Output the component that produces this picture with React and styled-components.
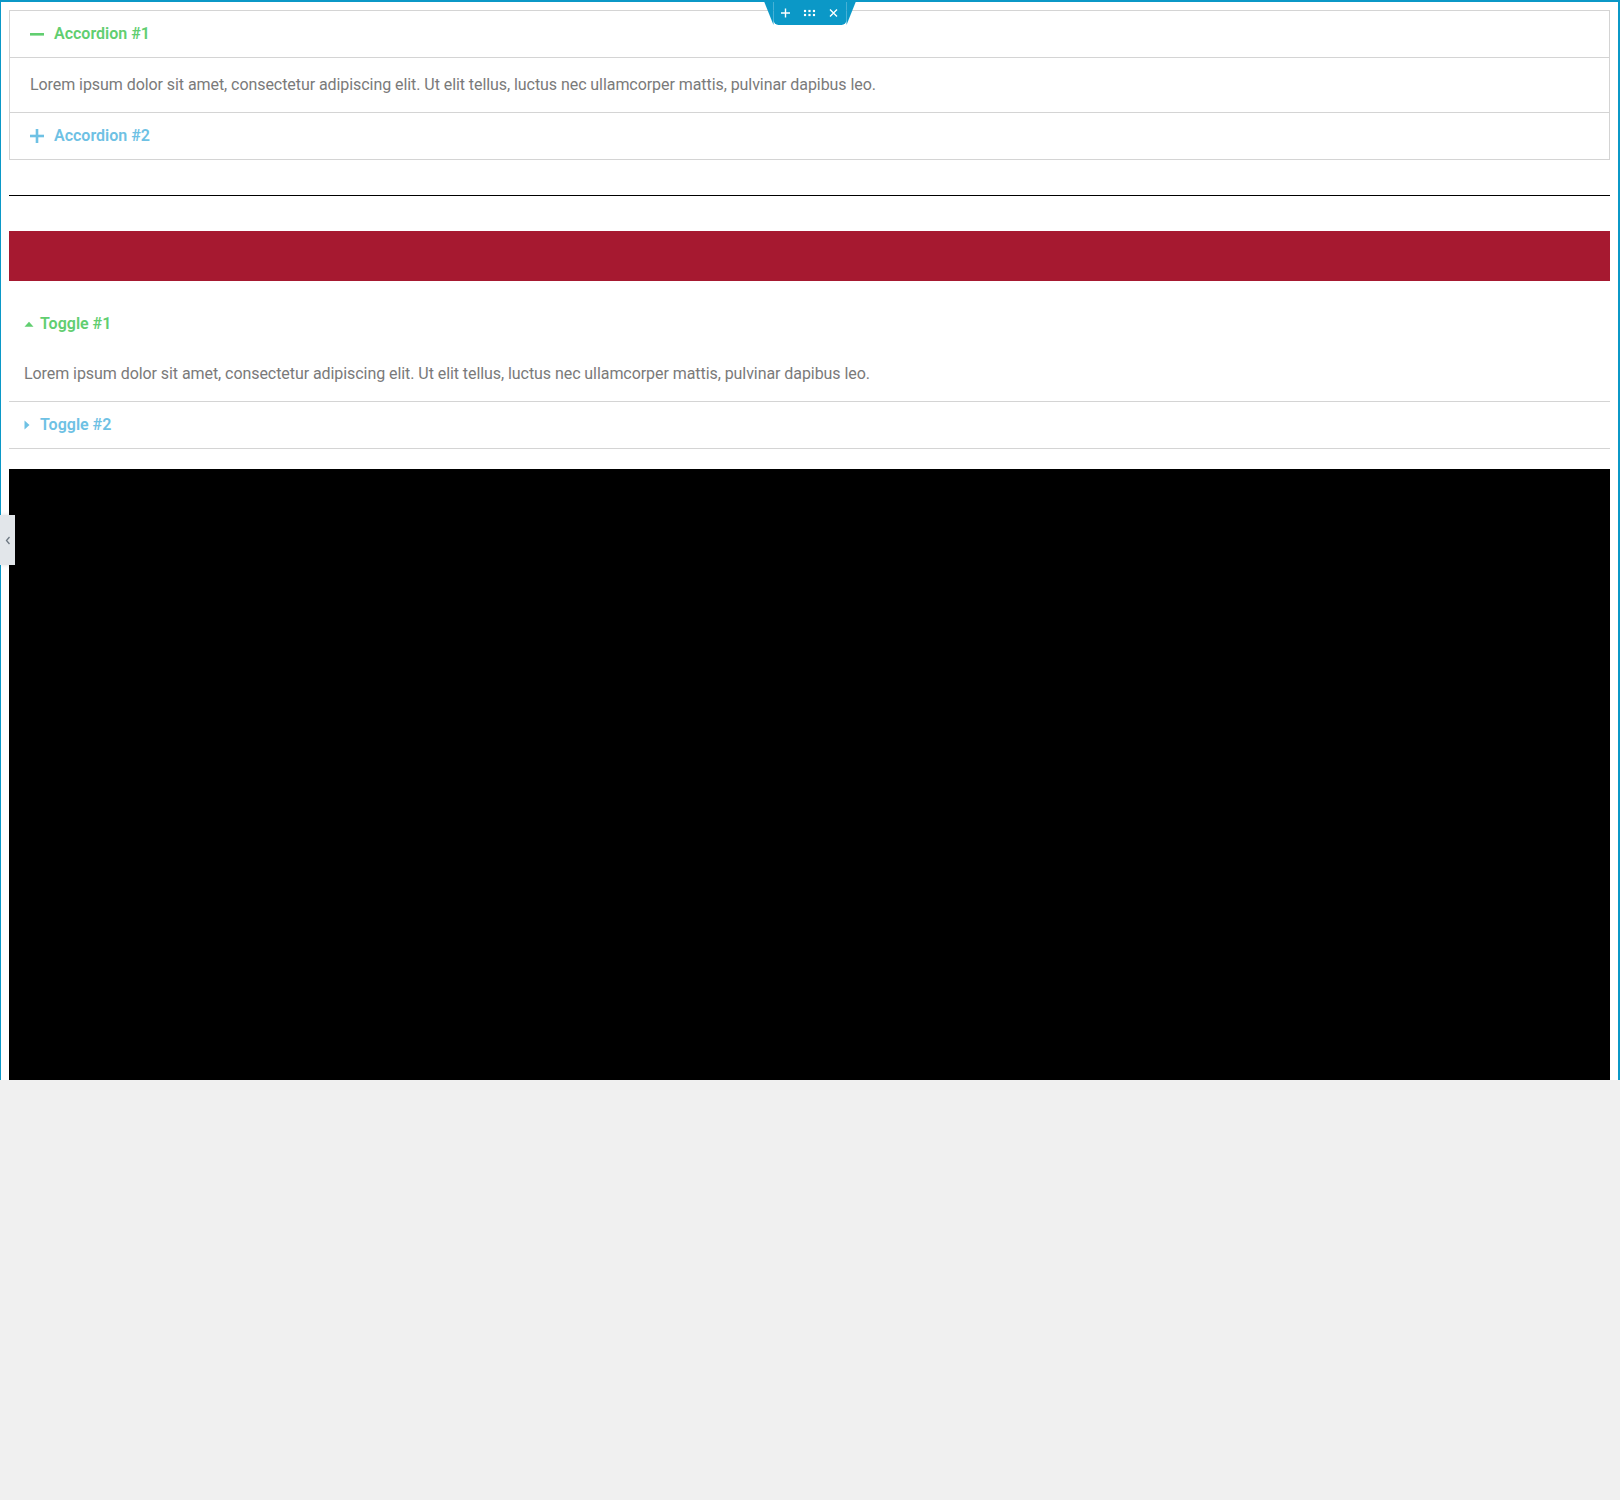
import React from 'react';
import styled, { createGlobalStyle } from 'styled-components';

const GlobalStyle = createGlobalStyle`
    html, body {
        margin: 0;
        padding: 0;
        background: #f0f0f0;
    }
    body {
        font-family: Roboto, "Liberation Sans", sans-serif;
    }
    * {
        box-sizing: border-box;
    }
`;

const BLUE = '#0b98c7';
const GREEN = '#61ce70';
const LIGHT_BLUE = '#6ec1e4';
const TEXT = '#7a7a7a';
const LINE = '#d4d4d4';

const Frame = styled.div`
    position: relative;
    height: 1080px;
    background: #fff;
    border-top: 2px solid ${BLUE};
    border-left: 1px solid ${BLUE};
    border-right: 2px solid ${BLUE};
    padding: 8px 8px 0 8px;
    display: flex;
    flex-direction: column;
    gap: 20px;
`;

const Handle = styled.div`
    position: absolute;
    top: -2px;
    left: 50%;
    transform: translateX(-50%);
    height: 25px;
    width: 73px;
    background: ${BLUE};
    border-radius: 0 0 5px 5px;
    display: flex;
    align-items: center;
    justify-content: center;
    gap: 12px;
    z-index: 2;

    &::before, &::after {
        content: '';
        position: absolute;
        top: 0;
        border-top: 25px solid ${BLUE};
    }
    &::before {
        right: 100%;
        border-left: 10px solid transparent;
    }
    &::after {
        left: 100%;
        border-right: 10px solid transparent;
    }
`;

const HandleIcon = styled.svg`
    width: 12px;
    height: 12px;
    display: block;
`;

const SideTab = styled.div`
    position: absolute;
    left: -1px;
    top: 513px;
    width: 15px;
    height: 50px;
    background: #e2e6ea;
    box-shadow: 0 0 4px rgba(0,0,0,0.12);
    display: flex;
    align-items: center;
    justify-content: center;
    z-index: 2;
`;

const Accordion = styled.div`
    display: flex;
    flex-direction: column;
`;

const AccordionItem = styled.div`
    border: 1px solid ${LINE};
    & + & {
        border-top: none;
    }
`;

const AccordionTitle = styled.div`
    display: flex;
    align-items: center;
    padding: 15px 20px;
    font-size: 16px;
    line-height: 1;
    font-weight: 600;
    color: ${p => (p.$active ? GREEN : LIGHT_BLUE)};
`;

const AccIcon = styled.span`
    width: 24px;
    display: flex;
    align-items: center;
`;

const AccordionContent = styled.div`
    border-top: 1px solid ${LINE};
    padding: 15px 20px;
    font-size: 16px;
    line-height: 1.5;
    letter-spacing: -0.065px;
    color: ${TEXT};
`;

const Divider = styled.div`
    padding: 15px 0;
`;

const DividerLine = styled.div`
    border-top: 1px solid #000;
`;

const RedBar = styled.div`
    height: 50px;
    background: #a61930;
`;

const Toggle = styled.div`
    display: flex;
    flex-direction: column;
`;

const ToggleTitle = styled.div`
    display: flex;
    align-items: center;
    padding: 15px;
    font-size: 16px;
    line-height: 1;
    font-weight: 600;
    color: ${p => (p.$active ? GREEN : LIGHT_BLUE)};
    border-bottom: ${p => (p.$active ? 'none' : `1px solid ${LINE}`)};
`;

const ToggleIcon = styled.span`
    width: 16px;
    display: flex;
    align-items: center;
`;

const ToggleContent = styled.div`
    padding: 15px;
    font-size: 16px;
    line-height: 1.5;
    letter-spacing: -0.065px;
    color: ${TEXT};
    border-bottom: 1px solid ${LINE};
`;

const VideoBlock = styled.div`
    flex: 1;
    background: #000;
`;

const LOREM = 'Lorem ipsum dolor sit amet, consectetur adipiscing elit. Ut elit tellus, luctus nec ullamcorper mattis, pulvinar dapibus leo.';

export default function App() {
    return (
        <>
            <GlobalStyle />
            <Frame>
                <Handle>
                    <HandleIcon viewBox="0 0 12 12">
                        <path d="M6 1.5v9M1.5 6h9" stroke="#fff" strokeWidth="1.4" />
                    </HandleIcon>
                    <HandleIcon viewBox="0 0 12 12">
                        {[1.5, 6, 10.5].map(x => [4, 8].map(y => (
                            <rect key={x + '-' + y} x={x - 1.1} y={y - 1.1} width="2.2" height="2.2" fill="#fff" />
                        )))}
                    </HandleIcon>
                    <HandleIcon viewBox="0 0 12 12">
                        <path d="M2.5 2.5l7 7M9.5 2.5l-7 7" stroke="#fff" strokeWidth="1.4" />
                    </HandleIcon>
                </Handle>
                <SideTab>
                    <svg width="6" height="9" viewBox="0 0 6 9">
                        <path d="M4.5 1L1.5 4.5 4.5 8" stroke="#6d7882" strokeWidth="1.3" fill="none" />
                    </svg>
                </SideTab>

                <Accordion>
                    <AccordionItem>
                        <AccordionTitle $active>
                            <AccIcon>
                                <svg width="14" height="14" viewBox="0 0 14 14">
                                    <rect x="0" y="6" width="14" height="2.6" fill={GREEN} />
                                </svg>
                            </AccIcon>
                            Accordion #1
                        </AccordionTitle>
                        <AccordionContent>{LOREM}</AccordionContent>
                    </AccordionItem>
                    <AccordionItem>
                        <AccordionTitle>
                            <AccIcon>
                                <svg width="14" height="14" viewBox="0 0 14 14">
                                    <rect x="0" y="5.7" width="14" height="2.6" fill={LIGHT_BLUE} />
                                    <rect x="5.7" y="0" width="2.6" height="14" fill={LIGHT_BLUE} />
                                </svg>
                            </AccIcon>
                            Accordion #2
                        </AccordionTitle>
                    </AccordionItem>
                </Accordion>

                <Divider>
                    <DividerLine />
                </Divider>

                <RedBar />

                <Toggle>
                    <ToggleTitle $active>
                        <ToggleIcon>
                            <svg width="10" height="6" viewBox="0 0 10 6">
                                <path d="M0.5 5.8L5 0.8 9.5 5.8Z" fill={GREEN} />
                            </svg>
                        </ToggleIcon>
                        Toggle #1
                    </ToggleTitle>
                    <ToggleContent>{LOREM}</ToggleContent>
                    <ToggleTitle>
                        <ToggleIcon>
                            <svg width="6" height="10" viewBox="0 0 6 10">
                                <path d="M0.5 0.5L5.5 5 0.5 9.5Z" fill={LIGHT_BLUE} />
                            </svg>
                        </ToggleIcon>
                        Toggle #2
                    </ToggleTitle>
                </Toggle>

                <VideoBlock />
            </Frame>
        </>
    );
}
